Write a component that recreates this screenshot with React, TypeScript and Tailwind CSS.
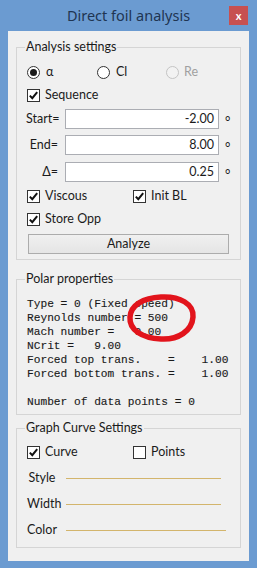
import React from 'react';

const Check = ({ checked }: { checked: boolean }) => (
  <span className="w-[13px] h-[13px] border border-[#333333] bg-white flex items-center justify-center shrink-0">
    {checked && (
      <svg width="11" height="11" viewBox="0 0 11 11">
        <path d="M1.8 5.6 L4.3 8.2 L9.2 2.2" stroke="#111" strokeWidth="2" fill="none" />
      </svg>
    )}
  </span>
);

const Radio = ({ checked, disabled }: { checked?: boolean; disabled?: boolean }) => (
  <span
    className={
      disabled
        ? 'w-[13px] h-[13px] rounded-full border border-[#c4c4c4] bg-[#f2f2f2] flex items-center justify-center shrink-0'
        : 'w-[13px] h-[13px] rounded-full border border-[#333333] bg-white flex items-center justify-center shrink-0'
    }
  >
    {checked && <span className="w-[7px] h-[7px] rounded-full bg-[#1a1a1a]" />}
  </span>
);

const Field = ({ label, value, className }: { label: string; value: string; className?: string }) => (
  <div className={'flex items-center h-[20px] ' + (className ?? '')}>
    <span className="w-[32px] text-right">{label}</span>
    <div className="ml-[7px] w-[154px] h-[20px] bg-white border border-[#abadb3] flex items-center justify-end pr-[4px]">
      {value}
    </div>
    <span className="ml-[6px] text-[13px] leading-none translate-y-[2px]">°</span>
  </div>
);

const Group = ({ title, className, children }: { title: string; className?: string; children: React.ReactNode }) => (
  <fieldset className={'border border-[#d5d5d5] ' + (className ?? '')}>
    <legend className="-ml-[2px] px-[1px] leading-[16px]">{title}</legend>
    {children}
  </fieldset>
);

const Line = ({ label, width, className }: { label: string; width: string; className?: string }) => (
  <div className={'flex items-center h-[20px] ' + (className ?? '')}>
    <span className="w-[30px] text-center">{label}</span>
    <span className={'ml-[9px] h-px bg-[#d3b56c] ' + width} />
  </div>
);

const polar = [
  'Type = 0 (Fixed speed)',
  'Reynolds number = 500',
  'Mach number =   0.00',
  'NCrit =   9.00',
  'Forced top trans.    =    1.00',
  'Forced bottom trans. =    1.00',
  '',
  'Number of data points = 0',
];

export default function App() {
  return (
    <div className="w-[257px] h-[568px] bg-[#6b9bd1] flex flex-col font-['Lato',sans-serif] text-[12.5px] text-[#1b1b1b]">
      {/* Title bar */}
      <div className="h-[31px] relative flex items-center justify-center shrink-0">
        <span className="font-['Noto_Sans',sans-serif] text-[14.5px] text-[#1f3552] leading-none">Direct foil analysis</span>
        <div className="absolute right-[9px] top-[6px] w-[19px] h-[19px] bg-[#c75050] flex items-center justify-center text-white text-[11px] font-bold leading-none">
          x
        </div>
      </div>

      {/* Client area */}
      <div className="mx-[8px] mb-[7px] flex-1 bg-[#f0f0f0] px-[8px] pt-[8px]">
        <Group title="Analysis settings" className="pl-[10px] pb-[5px]">
          <div className="flex items-center h-[20px] mt-[7px]">
            <div className="w-[70px] flex items-center gap-[6px]">
              <Radio checked />
              <span>α</span>
            </div>
            <div className="w-[69px] flex items-center gap-[6px]">
              <Radio />
              <span>Cl</span>
            </div>
            <div className="flex items-center gap-[5px] text-[#a0a0a0]">
              <Radio disabled />
              <span>Re</span>
            </div>
          </div>
          <div className="flex items-center h-[20px] mt-[3px] gap-[5px]">
            <Check checked />
            <span>Sequence</span>
          </div>
          <Field label="Start=" value="-2.00" className="mt-[4px] -ml-[1px]" />
          <Field label="End=" value="8.00" className="mt-[6px] -ml-[1px]" />
          <Field label="Δ=" value="0.25" className="mt-[7px] -ml-[1px]" />
          <div className="flex items-center h-[20px] mt-[4px]">
            <div className="w-[106px] flex items-center gap-[5px]">
              <Check checked />
              <span>Viscous</span>
            </div>
            <div className="flex items-center gap-[5px]">
              <Check checked />
              <span>Init BL</span>
            </div>
          </div>
          <div className="flex items-center h-[20px] mt-[3px] gap-[5px]">
            <Check checked />
            <span>Store Opp</span>
          </div>
          <button className="mt-[5px] ml-[1px] w-[201px] h-[20px] border border-[#acacac] bg-gradient-to-b from-[#f0f0f0] to-[#e5e5e5] text-[12.5px] leading-none text-[#1b1b1b]">
            Analyze
          </button>
        </Group>

        <Group title="Polar properties" className="mt-[11px] pl-[10px] pt-[10px] pb-[5px] relative">
          <div className="font-['Liberation_Mono',monospace] text-[11.2px] leading-[14px] whitespace-pre text-[#1a1a1a] [-webkit-text-stroke:0.12px_#1a1a1a]">
            {polar.map((l, i) => (
              <div key={i} className="h-[14px]">{l}</div>
            ))}
          </div>
          {/* red annotation circle */}
          <svg className="absolute left-[106px] top-[6px]" width="76" height="52" viewBox="0 0 76 52">
            <path
              d="M38 4 C57 3 71 11 70 24 C69 38 55 47 38 46 C19 45 6 37 7 24 C8 12 20 5 38 4 Z"
              stroke="#e2141c"
              strokeWidth="5.5"
              fill="none"
            />
          </svg>
        </Group>

        <Group title="Graph Curve Settings" className="mt-[5px] pl-[10px] pb-[7px]">
          <div className="flex items-center h-[20px] mt-[6px]">
            <div className="w-[106px] flex items-center gap-[5px]">
              <Check checked />
              <span>Curve</span>
            </div>
            <div className="flex items-center gap-[5px]">
              <Check checked={false} />
              <span>Points</span>
            </div>
          </div>
          <Line label="Style" width="w-[155px]" className="mt-[6px]" />
          <Line label="Width" width="w-[155px]" className="mt-[6px]" />
          <Line label="Color" width="w-[160px]" className="mt-[6px]" />
        </Group>
      </div>
    </div>
  );
}
